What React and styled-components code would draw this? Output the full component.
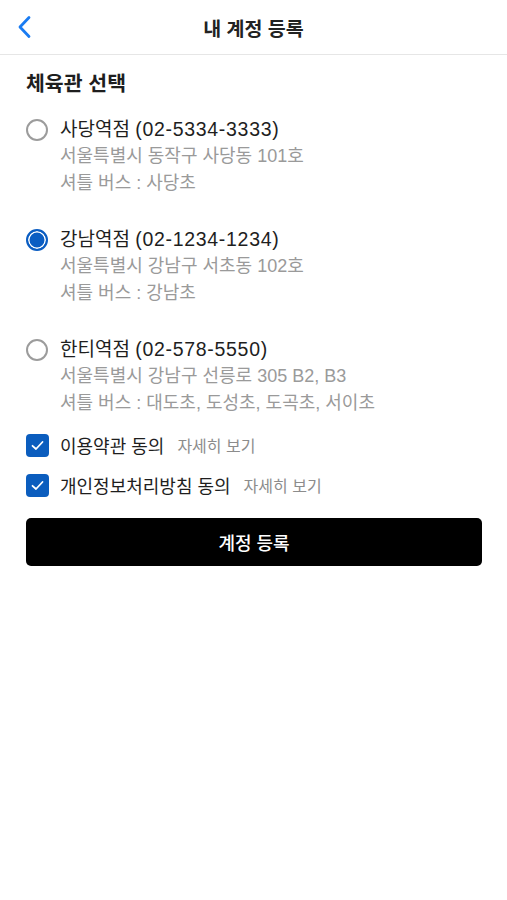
import React, { useState } from "react";
import styled, { createGlobalStyle } from "styled-components";

const GlobalStyle = createGlobalStyle`
  html, body {
    margin: 0;
    padding: 0;
    background: #fff;
  }
  body {
    font-family: "Liberation Sans", "Noto Sans CJK KR", sans-serif;
    color: #1c1c1c;
  }
`;

const Page = styled.div`
  width: 507px;
  min-height: 900px;
  background: #fff;
`;

const Header = styled.header`
  position: relative;
  height: 54px;
  display: flex;
  align-items: center;
  justify-content: center;
  border-bottom: 1px solid #e6e6e6;
`;

const BackButton = styled.button`
  position: absolute;
  left: 12px;
  top: 13px;
  width: 26px;
  height: 28px;
  padding: 0;
  border: 0;
  background: none;
  display: flex;
  align-items: center;
  justify-content: center;
`;

const HeaderTitle = styled.h1`
  margin: 0;
  font-size: 19.5px;
  font-weight: 600;
  color: #222;
`;

const Content = styled.main`
  padding: 15px 25px 0 26px;
`;

const SectionTitle = styled.h2`
  margin: 0;
  font-size: 20.5px;
  line-height: 28px;
  font-weight: 700;
  color: #1e1e1e;
`;

const OptionList = styled.div`
  display: flex;
  flex-direction: column;
  gap: 29px;
  margin-top: 18px;
`;

const Option = styled.label`
  display: grid;
  grid-template-columns: 22px 1fr;
  column-gap: 12px;
  cursor: pointer;
`;

const Radio = styled.span`
  width: 22px;
  height: 22px;
  box-sizing: border-box;
  border-radius: 50%;
  align-self: center;
  border: 2px solid ${(p) => (p.checked ? "#0a5dc2" : "#9c9c9c")};
  background: ${(p) => (p.checked ? "#0a5dc2" : "#fff")};
  box-shadow: ${(p) => (p.checked ? "inset 0 0 0 1.5px #fff" : "none")};
`;

const OptionName = styled.div`
  font-size: 19px;
  line-height: 27px;
  color: #1e1e1e;
`;

const Phone = styled.span`
  font-size: 19.5px;
  letter-spacing: 0.7px;
`;

const OptionDetail = styled.div`
  grid-column: 2;
  font-size: 18px;
  line-height: 27px;
  color: #9a9a9a;
`;

const Agreements = styled.div`
  display: flex;
  flex-direction: column;
  gap: 10px;
  margin-top: 13px;
`;

const AgreeRow = styled.div`
  height: 30px;
  display: flex;
  align-items: center;
`;

const CheckBox = styled.span`
  width: 23px;
  height: 23px;
  border-radius: 4px;
  background: #0b5dbe;
  display: flex;
  align-items: center;
  justify-content: center;
  flex-shrink: 0;
  margin-right: 11px;
`;

const AgreeLabel = styled.span`
  font-size: 18px;
  color: #1e1e1e;
`;

const DetailLink = styled.span`
  font-size: 16px;
  color: #8c8c8c;
  margin-left: 13px;
`;

const SubmitButton = styled.button`
  margin-top: 18px;
  width: 100%;
  height: 48px;
  border: 0;
  border-radius: 5px;
  background: #000;
  color: #fff;
  font-family: inherit;
  font-size: 18px;
  font-weight: 500;
`;

const gyms = [
  {
    name: "사당역점",
    phone: "02-5334-3333",
    address: "서울특별시 동작구 사당동 101호",
    shuttle: "셔틀 버스 : 사당초",
  },
  {
    name: "강남역점",
    phone: "02-1234-1234",
    address: "서울특별시 강남구 서초동 102호",
    shuttle: "셔틀 버스 : 강남초",
  },
  {
    name: "한티역점",
    phone: "02-578-5550",
    address: "서울특별시 강남구 선릉로 305 B2, B3",
    shuttle: "셔틀 버스 : 대도초, 도성초, 도곡초, 서이초",
  },
];

const agreements = [
  { label: "이용약관 동의" },
  { label: "개인정보처리방침 동의" },
];

const Check = () => (
  <svg width="15" height="15" viewBox="0 0 15 15">
    <polyline points="2.5,7.8 6,11 12.5,4" fill="none" stroke="#fff" strokeWidth="1.8" strokeLinecap="round" strokeLinejoin="round" />
  </svg>
);

const App = () => {
  const [selected, setSelected] = useState(1);

  return (
    <Page>
      <GlobalStyle />
      <Header>
        <BackButton>
          <svg width="16" height="24" viewBox="0 0 16 24">
            <polyline points="12,2.5 3,12 12,21.5" fill="none" stroke="#1a7cf2" strokeWidth="2.8" strokeLinecap="round" strokeLinejoin="round" />
          </svg>
        </BackButton>
        <HeaderTitle>내 계정 등록</HeaderTitle>
      </Header>
      <Content>
        <SectionTitle>체육관 선택</SectionTitle>
        <OptionList>
          {gyms.map((gym, index) => (
            <Option key={gym.name} onClick={() => setSelected(index)}>
              <Radio checked={selected === index} />
              <OptionName>
                {gym.name} <Phone>({gym.phone})</Phone>
              </OptionName>
              <OptionDetail>{gym.address}</OptionDetail>
              <OptionDetail>{gym.shuttle}</OptionDetail>
            </Option>
          ))}
        </OptionList>
        <Agreements>
          {agreements.map((item) => (
            <AgreeRow key={item.label}>
              <CheckBox>
                <Check />
              </CheckBox>
              <AgreeLabel>{item.label}</AgreeLabel>
              <DetailLink>자세히 보기</DetailLink>
            </AgreeRow>
          ))}
        </Agreements>
        <SubmitButton>계정 등록</SubmitButton>
      </Content>
    </Page>
  );
};

export default App;
